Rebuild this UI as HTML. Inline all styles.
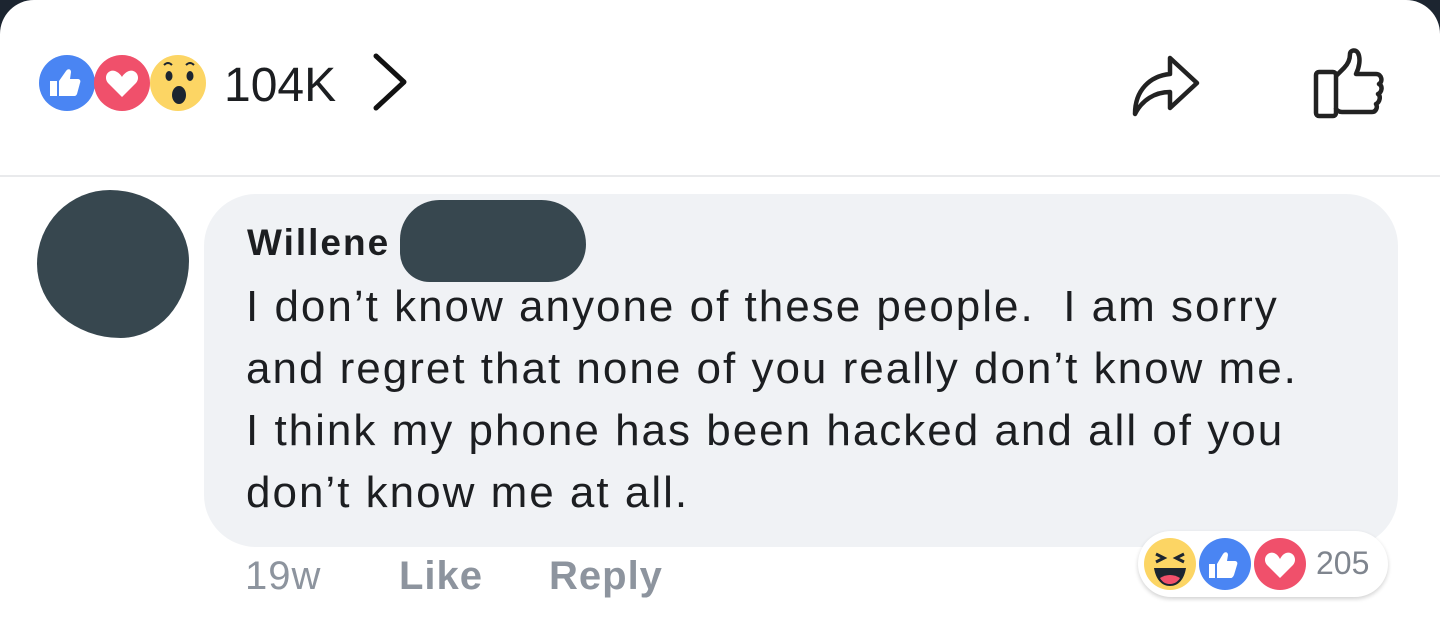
<!DOCTYPE html>
<html><head><meta charset="utf-8"><style>
html,body{margin:0;padding:0;}
body{width:1440px;height:634px;background:#1c2530;position:relative;overflow:hidden;font-family:"Liberation Sans",sans-serif;}
.card{position:absolute;left:0;top:0;width:1440px;height:634px;background:#fff;border-radius:34px 34px 0 0;}
.abs{position:absolute;}
.divider{left:0;top:175px;width:1440px;height:2px;background:#e9eaec;}
.bubble{left:204px;top:194px;width:1194px;height:353px;background:#f0f2f5;border-radius:52px;}
.name{left:247px;top:222px;font-size:37px;font-weight:bold;color:#1c1e21;letter-spacing:2px;}
.txt{left:246px;top:276px;font-size:44px;line-height:62px;color:#1c1e21;white-space:nowrap;letter-spacing:2px;}
.foot{top:554px;font-size:40px;color:#8d949e;font-weight:bold;letter-spacing:1px;}
.pill{left:1138px;top:531px;width:250px;height:66px;background:#fff;border-radius:33px;box-shadow:0 2px 4px rgba(0,0,0,0.18);}
</style></head><body>
<div class="card"></div>
<svg class="abs" style="left:36px;top:53px" width="180" height="60" viewBox="0 0 180 60">
  <circle cx="31" cy="30" r="28" fill="#4a85f3"/>
  <path d="M14 28h7v15h-7z M23 28l7-10c2-3 5-2 5 1l-1 7h8c2 0 3 2 2 4l-3 11c-1 2-2 2-3 2H23z" fill="#fff"/>
  <circle cx="86" cy="30" r="28" fill="#f0506b"/>
  <path d="M86 44 L72 30 C67 24 72 16 79 18 C82 19 85 22 86 24 C87 22 90 19 93 18 C100 16 105 24 100 30 Z" fill="#fff"/>
  <circle cx="142" cy="30" r="28" fill="#fcd564"/>
  <ellipse cx="133" cy="23" rx="3.5" ry="5" fill="#1c2530"/>
  <ellipse cx="154" cy="23" rx="3.5" ry="5" fill="#1c2530"/>
  <path d="M128 12 q4 -4 8 0 M150 12 q4 -4 8 0" stroke="#1c2530" stroke-width="2" fill="none"/>
  <ellipse cx="143" cy="42" rx="7" ry="9" fill="#1c2530"/>
</svg>
<div class="abs" style="left:224px;top:58px;font-size:48px;color:#1c1e21;letter-spacing:0px">104K</div>
<svg class="abs" style="left:370px;top:52px" width="40" height="62"><path d="M6 4 L34 30 L6 56" stroke="#111" stroke-width="5" fill="none" stroke-linecap="round" stroke-linejoin="round"/></svg>
<svg class="abs" style="left:1130px;top:50px" width="75" height="70" viewBox="0 0 75 70">
  <path d="M5 64 C5 40 20 26 40 24 V8 L67 33 L40 58 V42 C25 42 12 50 5 64 Z" stroke="#222" stroke-width="4.5" fill="none" stroke-linejoin="round"/>
</svg>
<svg class="abs" style="left:1310px;top:48px" width="80" height="74" viewBox="0 0 80 74">
  <rect x="6" y="24" width="20" height="44" rx="3" stroke="#222" stroke-width="4.5" fill="none"/>
  <path d="M26 28 L34 20 C38 16 40 12 40 6 C40 2 46 1 48 5 C51 11 49 20 46 26 H66 C72 26 73 34 69 36 C73 38 72 44 68 46 C71 48 70 54 66 56 C68 59 66 64 62 64 H32 C29 64 26 62 26 60" stroke="#222" stroke-width="4.5" fill="none" stroke-linejoin="round"/>
</svg>
<div class="abs divider"></div>
<div class="abs" style="left:37px;top:190px;width:152px;height:148px;background:#37474f;border-radius:48% 52% 45% 55% / 50% 48% 52% 50%;"></div>
<div class="abs bubble"></div>
<div class="abs name">Willene</div>
<div class="abs" style="left:400px;top:200px;width:186px;height:82px;background:#37474f;border-radius:40px 45px 38px 30px;"></div>
<div class="abs txt">I don’t know anyone of these people.&nbsp; I am sorry<br>and regret that none of you really don’t know me.<br>I think my phone has been hacked and all of you<br>don’t know me at all.</div>
<div class="abs foot" style="left:245px;font-weight:normal">19w</div>
<div class="abs foot" style="left:399px">Like</div>
<div class="abs foot" style="left:549px">Reply</div>
<div class="abs pill"></div>
<svg class="abs" style="left:1140px;top:534px" width="180" height="60" viewBox="0 0 180 60">
  <circle cx="30" cy="30" r="29" fill="#fff"/><circle cx="30" cy="30" r="26" fill="#fcd564"/>
  <path d="M16 20 l8 4 l-8 4 M44 20 l-8 4 l8 4" stroke="#1c2530" stroke-width="3" fill="none"/>
  <path d="M14 34 H46 C44 46 38 52 30 52 C22 52 16 46 14 34 Z" fill="#1c2530"/>
  <path d="M20 44 C26 40 34 40 40 44 C37 49 33 50 30 50 C26 50 23 49 20 44 Z" fill="#f0506b"/>
  <circle cx="85" cy="30" r="29" fill="#fff"/><circle cx="85" cy="30" r="26" fill="#4a85f3"/>
  <path d="M69 30h6v14h-6z M77 30l6-10c2-3 5-2 5 1l-1 6h8c2 0 3 2 2 4l-3 10c-1 2-2 3-3 3H77z" fill="#fff"/>
  <circle cx="140" cy="30" r="29" fill="#fff"/><circle cx="140" cy="30" r="26" fill="#f0506b"/>
  <path d="M140 44 L127 31 C122 25 127 17 134 19 C137 20 139 23 140 25 C141 23 143 20 146 19 C153 17 158 25 153 31 Z" fill="#fff"/>
</svg>
<div class="abs" style="left:1316px;top:545px;font-size:32px;color:#7f858e">205</div>
</body></html>
